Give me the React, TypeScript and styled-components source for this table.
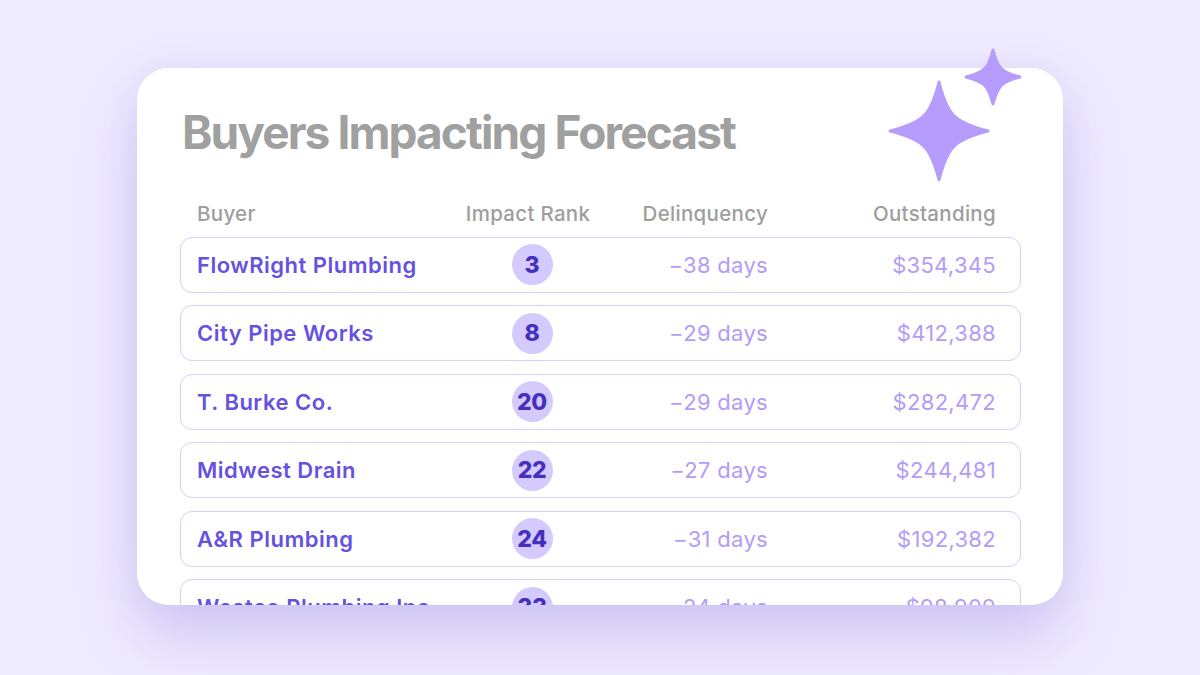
import React from "react";
import styled, { createGlobalStyle } from "styled-components";

const Global = createGlobalStyle`
  html, body { margin: 0; padding: 0; }
  body {
    width: 1200px;
    height: 675px;
    overflow: hidden;
    background: #efebfe;
    font-family: Inter, "Noto Sans", Arial, sans-serif;
  }
`;

const Page = styled.div`
  width: 1200px;
  height: 675px;
  padding: 68px 0 0 137px;
  box-sizing: border-box;
`;

const CardWrap = styled.div`
  position: relative;
  width: 926px;
  height: 537px;
`;

const Card = styled.div`
  width: 100%;
  height: 100%;
  background: #ffffff;
  border-radius: 32px;
  overflow: hidden;
  box-sizing: border-box;
  padding: 36px 42px 0 43px;
  box-shadow: 0 34px 56px rgba(140, 118, 225, 0.28), 0 0 40px rgba(150, 130, 235, 0.12);
  display: flex;
  flex-direction: column;
`;

const Title = styled.h1`
  margin: 0 0 0 2px;
  font-size: 46px;
  line-height: 56px;
  font-weight: 700;
  letter-spacing: -1.9px;
  color: #a0a0a0;
`;

const Sparkles = styled.svg`
  position: absolute;
  left: 748px;
  top: -22px;
  width: 140px;
  height: 140px;
  overflow: visible;
`;

const Table = styled.div`
  margin-top: 41px;
  display: flex;
  flex-direction: column;
  gap: 12.5px;
`;

const cols = `295px 80px 196px 228px`;

const HeaderRow = styled.div`
  display: grid;
  grid-template-columns: ${cols};
  padding: 0 24px 0 17px;
  height: 24px;
  align-items: center;
  font-size: 20.5px;
  font-weight: 500;
  color: #9e9e9e;
  letter-spacing: 0.3px;
  margin-bottom: -1px;
`;

const HeadCell = styled.div<{ $align: "left" | "center" | "right" }>`
  white-space: nowrap;
  display: flex;
  ${(p) => (p.$align === "center" ? "margin-left: -80px; margin-right: -72px;" : "")}
  justify-content: ${(p) =>
    p.$align === "left" ? "flex-start" : p.$align === "center" ? "center" : "flex-end"};
`;

const Row = styled.div`
  display: grid;
  grid-template-columns: ${cols};
  align-items: center;
  height: 56px;
  box-sizing: border-box;
  flex-shrink: 0;
  padding: 0 24px 0 16px;
  border: 1.5px solid #d6cefd;
  border-radius: 12px;
`;

const Name = styled.div`
  font-size: 22px;
  font-weight: 600;
  color: #6552df;
  letter-spacing: 0.5px;
  white-space: nowrap;
`;

const RankCell = styled.div`
  display: flex;
  justify-content: center;
`;

const Badge = styled.div`
  width: 41px;
  height: 41px;
  border-radius: 50%;
  background: #d4cafd;
  color: #4530be;
  font-size: 23px;
  font-weight: 800;
  letter-spacing: -0.3px;
  display: flex;
  align-items: center;
  justify-content: center;
`;

const Value = styled.div`
  text-align: right;
  font-size: 22px;
  font-weight: 400;
  color: #b39cf8;
  letter-spacing: 0.3px;
  white-space: nowrap;
`;

const rows = [
  { name: "FlowRight Plumbing", rank: 3, days: "−38 days", amount: "$354,345" },
  { name: "City Pipe Works", rank: 8, days: "−29 days", amount: "$412,388" },
  { name: "T. Burke Co.", rank: 20, days: "−29 days", amount: "$282,472" },
  { name: "Midwest Drain", rank: 22, days: "−27 days", amount: "$244,481" },
  { name: "A&R Plumbing", rank: 24, days: "−31 days", amount: "$192,382" },
  { name: "Westco Plumbing Inc.", rank: 33, days: "−24 days", amount: "$98,909" },
];

const star = (cx: number, cy: number, r: number) => {
  const k = r * 0.17;
  const m = r * 0.32;
  return `M${cx} ${cy - r} C${cx + k} ${cy - m} ${cx + m} ${cy - k} ${cx + r} ${cy} C${cx + m} ${cy + k} ${cx + k} ${cy + m} ${cx} ${cy + r} C${cx - k} ${cy + m} ${cx - m} ${cy + k} ${cx - r} ${cy} C${cx - m} ${cy - k} ${cx - k} ${cy - m} ${cx} ${cy - r} Z`;
};

export default function App() {
  return (
    <>
      <Global />
      <Page>
        <CardWrap>
          <Card>
            <Title>Buyers Impacting Forecast</Title>
            <Table>
              <HeaderRow>
                <HeadCell $align="left">Buyer</HeadCell>
                <HeadCell $align="center">Impact Rank</HeadCell>
                <HeadCell $align="right">Delinquency</HeadCell>
                <HeadCell $align="right">Outstanding</HeadCell>
              </HeaderRow>
              {rows.map((r) => (
                <Row key={r.name}>
                  <Name>{r.name}</Name>
                  <RankCell>
                    <Badge>{r.rank}</Badge>
                  </RankCell>
                  <Value>{r.days}</Value>
                  <Value>{r.amount}</Value>
                </Row>
              ))}
            </Table>
          </Card>
          <Sparkles viewBox="0 0 140 140">
            <path
              d={star(54, 85, 49)}
              fill="#b69cfd"
              stroke="#b69cfd"
              strokeWidth="3"
              strokeLinejoin="round"
            />
            <path
              d={star(108, 31, 27)}
              fill="#b69cfd"
              stroke="#b69cfd"
              strokeWidth="3"
              strokeLinejoin="round"
            />
          </Sparkles>
        </CardWrap>
      </Page>
    </>
  );
}
